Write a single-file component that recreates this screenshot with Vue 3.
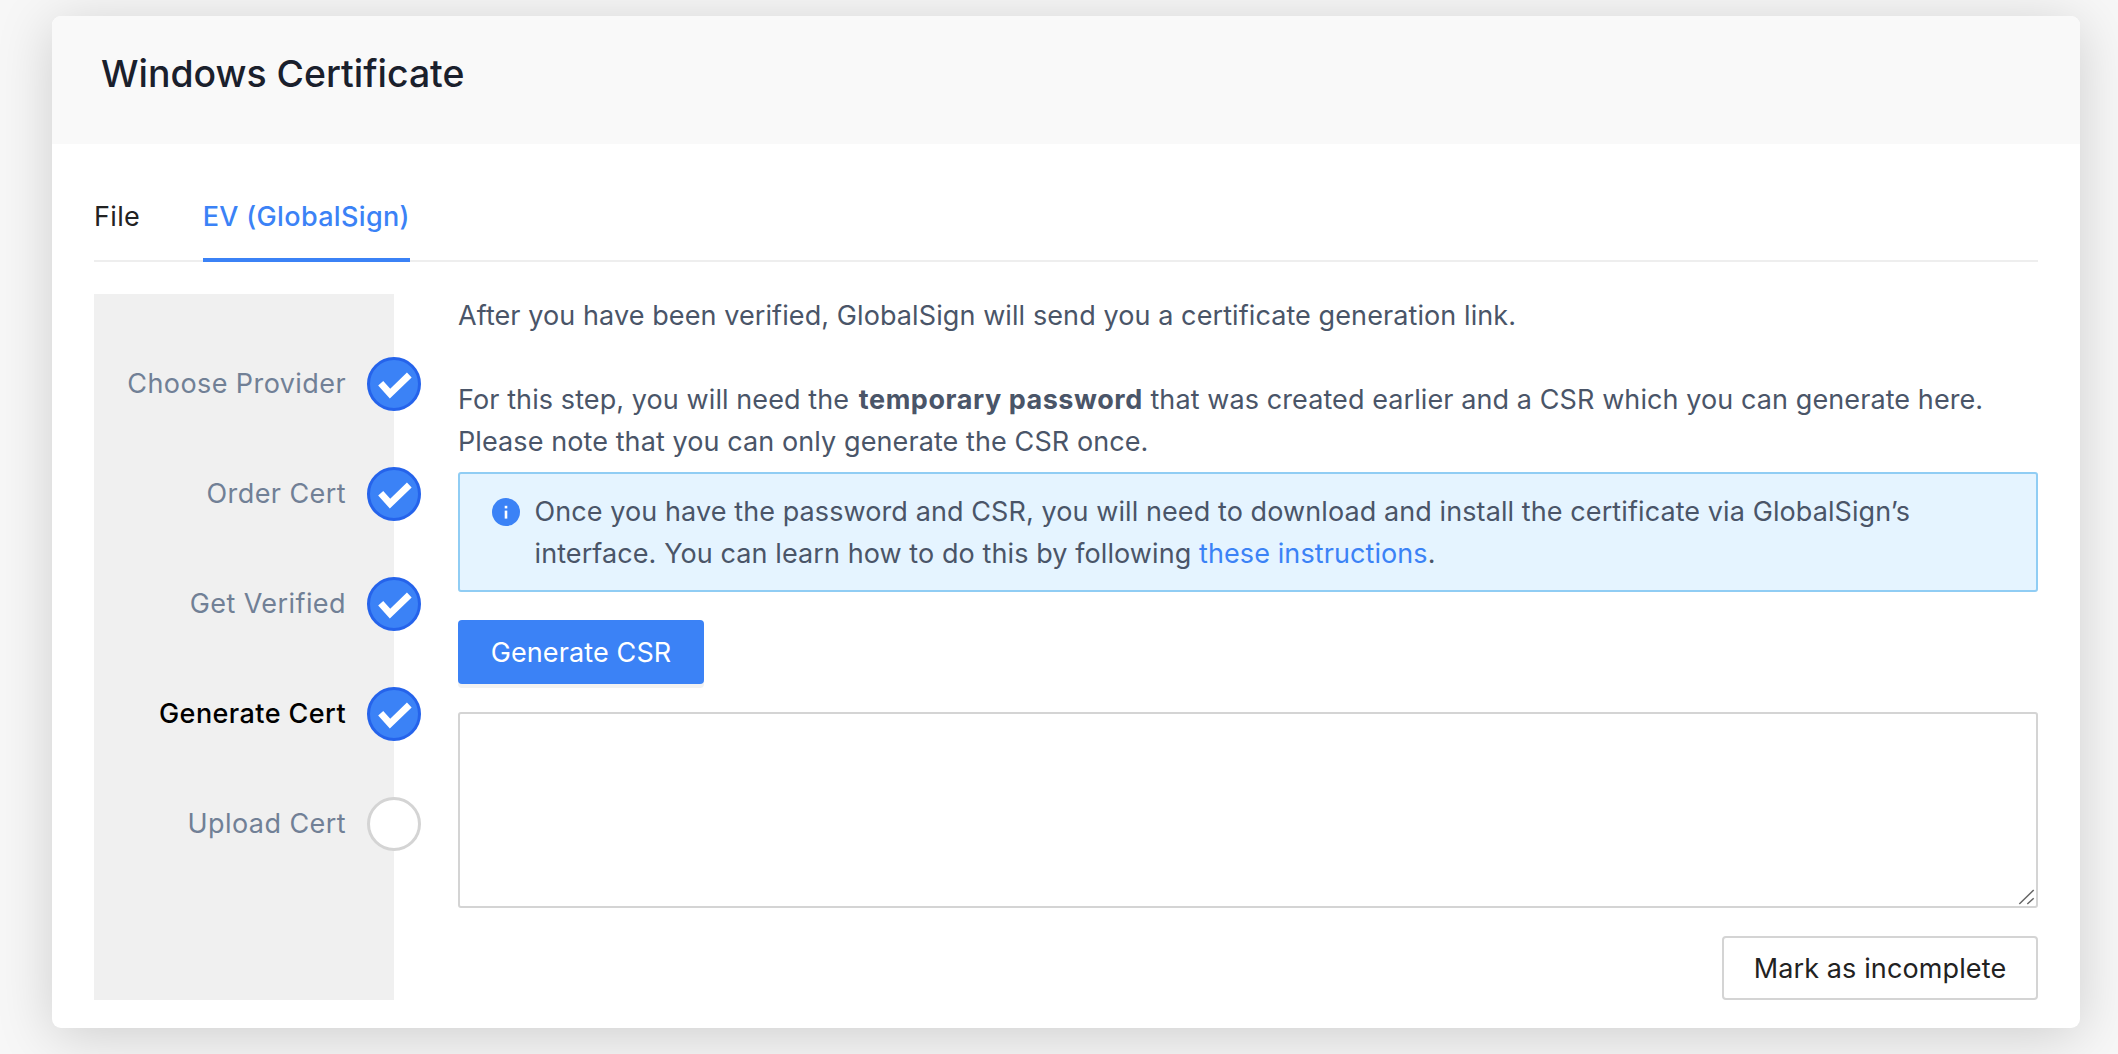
<script setup>
const steps = [
  { label: 'Choose Provider', done: true },
  { label: 'Order Cert', done: true },
  { label: 'Get Verified', done: true },
  { label: 'Generate Cert', done: true, current: true },
  { label: 'Upload Cert', done: false },
]
</script>

<template>
  <div class="page">
    <section class="card">
      <header class="card-head">
        <h1>Windows Certificate</h1>
      </header>
      <div class="card-body">
        <nav class="tabs">
          <a class="tab">File</a>
          <a class="tab active">EV (GlobalSign)</a>
        </nav>
        <div class="wizard">
          <aside class="rail">
            <div v-for="s in steps" :key="s.label" class="step" :class="{ current: s.current }">
              <span class="step-label">{{ s.label }}</span>
              <span class="dot" :class="{ done: s.done }">
                <svg v-if="s.done" viewBox="3 3 48 48" width="48" height="48">
                  <path d="M13.7 26.3 L23 36.6 L42.3 18" fill="none" stroke="#fff" stroke-width="6.8" />
                </svg>
              </span>
            </div>
          </aside>
          <main class="panel">
            <p class="intro">After you have been verified, GlobalSign will send you a certificate generation link.</p>
            <p class="intro second">For this step, you will need the <strong>temporary password</strong> that was created earlier and a CSR which you can generate here. Please note that you can only generate the CSR once.</p>
            <div class="alert">
              <svg class="info" viewBox="0 0 28 28" width="28" height="28">
                <circle cx="14" cy="14" r="14" fill="#3b82f6" />
                <rect x="12.7" y="12.6" width="2.6" height="8" fill="#fff" />
                <rect x="12.7" y="7.8" width="2.6" height="2.6" fill="#fff" />
              </svg>
              <p>Once you have the password and CSR, you will need to download and install the certificate via GlobalSign’s interface. You can learn how to do this by following <a>these instructions</a>.</p>
            </div>
            <button class="btn primary">Generate CSR</button>
            <div class="csr-wrap">
              <textarea class="csr"></textarea>
              <svg class="grip" viewBox="0 0 24 24" width="24" height="24">
                <path d="M5.3 20 L19.7 6 M13.3 20 L19.7 14.3" fill="none" stroke="#666" stroke-width="1.5" />
              </svg>
            </div>
            <div class="actions">
              <button class="btn outline">Mark as incomplete</button>
            </div>
          </main>
        </div>
      </div>
    </section>
  </div>
</template>

<style>
html, body { margin: 0; background: #f7f7f7; }
</style>

<style scoped>
.page {
  box-sizing: border-box;
  height: 1054px;
  padding: 16px 38px 26px 52px;
  background: #f7f7f7;
  overflow: hidden;
  font-family: Inter, "Liberation Sans", sans-serif;
  color: #4b5563;
}
.card {
  height: 1012px;
  display: flex;
  flex-direction: column;
  background: #fff;
  border-radius: 9px;
  box-shadow: 0 8px 56px rgba(0, 0, 0, 0.17);
  overflow: hidden;
}
.card-head {
  height: 128px;
  flex: none;
  box-sizing: border-box;
  display: flex;
  align-items: center;
  padding: 0 0 14px 49px;
  background: #f9f9f9;
}
h1 {
  margin: 0;
  font-size: 37.4px;
  font-weight: 500;
  color: #1a202c;
}
.card-body {
  flex: 1;
  display: flex;
  flex-direction: column;
  padding: 0 42px 28px;
  min-height: 0;
}
.tabs {
  height: 118px;
  flex: none;
  box-sizing: border-box;
  display: flex;
  align-items: flex-end;
  gap: 62.5px;
  border-bottom: 2px solid #eeeeee;
}
.tab {
  height: 76px;
  margin-bottom: -2px;
  box-sizing: border-box;
  padding-top: 11px;
  font-size: 27px;
  letter-spacing: 0.34px;
  line-height: 40px;
  color: #222;
}
.tab.active {
  color: #3b82f6;
  font-weight: 500;
  border-bottom: 4px solid #3b82f6;
}
.wizard {
  flex: 1;
  display: flex;
  gap: 64px;
  margin-top: 32px;
  min-height: 0;
}
.rail {
  width: 300px;
  flex: none;
  box-sizing: border-box;
  padding-top: 63px;
  background: #f0f0f0;
  display: flex;
  flex-direction: column;
  gap: 56px;
}
.step {
  display: flex;
  align-items: center;
  justify-content: flex-end;
  gap: 21px;
  margin-right: -27px;
  height: 54px;
  font-size: 27px;
  letter-spacing: 0.42px;
  color: #718096;
}
.step-label { padding-bottom: 2px; }
.step.current { color: #000; font-weight: 500; }
.dot {
  width: 54px;
  height: 54px;
  flex: none;
  box-sizing: border-box;
  border-radius: 50%;
  border: 3px solid #d4d4d4;
  background: #fff;
  display: flex;
  align-items: center;
  justify-content: center;
}
.dot.done { border-color: #2563eb; background: #3b82f6; }
.panel {
  flex: 1;
  min-width: 0;
  display: flex;
  flex-direction: column;
  padding-top: 1px;
  font-size: 27px;
  letter-spacing: 0.09px;
  line-height: 42px;
}
p { margin: 0; }
.intro { color: #4a5568; }
.second { margin-top: 42px; }
strong { font-weight: 700; letter-spacing: 0.55px; margin-left: 2px; }
.alert {
  box-sizing: border-box;
  height: 120px;
  margin-top: 9px;
  padding: 17px 32px 0 32px;
  display: flex;
  gap: 14.5px;
  background: #e5f4ff;
  border: 2px solid #90cdf4;
  border-radius: 3px;
  color: #4a5568;
}
.alert a { color: #3b82f6; }
.info { flex: none; margin-top: 7px; }
.btn {
  font-family: inherit;
  font-size: 27px;
  letter-spacing: 0.12px;
  border-radius: 4px;
  cursor: pointer;
}
.primary {
  align-self: flex-start;
  width: 246px;
  height: 64px;
  margin-top: 28px;
  border: 0;
  background: #3b82f6;
  color: #fff;
  box-shadow: 0 4px 0 #f2f2f2;
}
.csr-wrap {
  position: relative;
  height: 196px;
  flex: none;
  margin-top: 28px;
}
.csr {
  display: block;
  width: 100%;
  height: 100%;
  box-sizing: border-box;
  border: 2px solid #d4d4d4;
  border-radius: 3px;
  resize: none;
  background: #fff;
  outline: none;
}
.grip {
  position: absolute;
  right: 0;
  bottom: 0;
}
.actions {
  margin-top: 28px;
  display: flex;
  justify-content: flex-end;
}
.outline {
  width: 316px;
  height: 64px;
  background: #fff;
  border: 2px solid #d4d4d4;
  color: #222;
}
</style>
